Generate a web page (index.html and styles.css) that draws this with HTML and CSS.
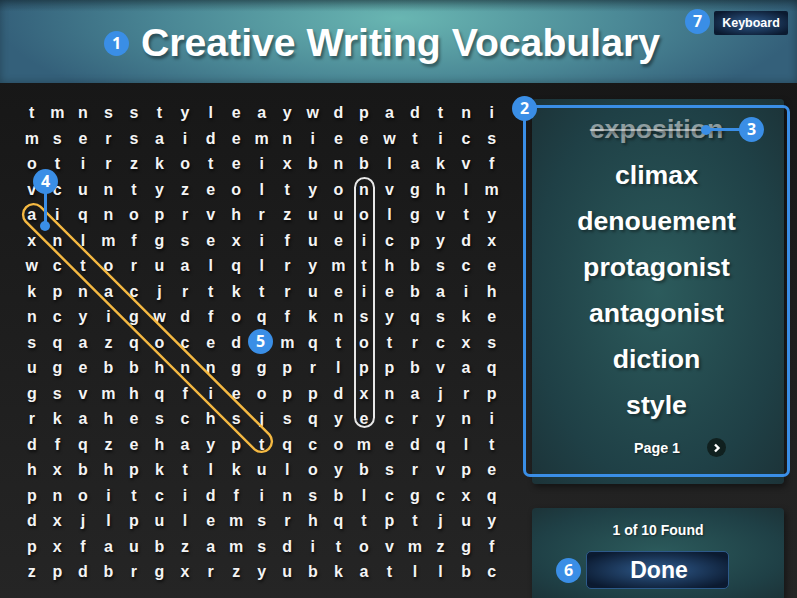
FILE: index.html
```html
<!DOCTYPE html>
<html lang="en">
  <head>
    <meta charset="UTF-8" />
    <title>Creative Writing Vocabulary</title>
    <link rel="stylesheet" href="styles.css">
  </head>
  <body>
    <header class="header">
      <h1 class="title">Creative Writing Vocabulary</h1>
      <button class="btn btn-keyboard">Keyboard</button>
      <span class="badge badge-1">1</span>
      <span class="badge badge-7">7</span>
    </header>

    <main class="main">
      <section class="puzzle">
        <div class="grid" id="grid"></div>

        <!-- found word outlines -->
        <svg class="marks" width="510" height="515" viewBox="0 0 510 515" fill="none">
          <rect x="355" y="95" width="19" height="249" rx="9.5" stroke="#e8e8e8" stroke-width="2" />
          <path d="M40.4 123.6 L269.4 351.6 A10.5 10.5 0 0 1 254.6 366.4 L25.6 138.4 A10.5 10.5 0 0 1 40.4 123.6 Z" stroke="#f5b942" stroke-width="2.4" />
        </svg>
        <span class="badge badge-4">4</span>
        <span class="pointer pointer-4"></span>
        <span class="dot dot-4"></span>
        <span class="badge badge-5">5</span>
      </section>

      <aside class="side">
        <div class="panel words">
          <ul class="word-list">
            <li class="found">exposition</li>
            <li>climax</li>
            <li>denouement</li>
            <li>protagonist</li>
            <li>antagonist</li>
            <li>diction</li>
            <li>style</li>
          </ul>
          <div class="pager">
            <span>Page 1</span>
            <span class="next">
              <svg width="8" height="10" viewBox="0 0 8 10" fill="none">
                <path d="M2 1.5 L5.5 5 L2 8.5" stroke="#fff" stroke-width="2.4" />
              </svg>
            </span>
          </div>
          <div class="highlight"></div>
          <span class="badge badge-2">2</span>
          <span class="badge badge-3">3</span>
          <span class="pointer pointer-3"></span>
          <span class="dot dot-3"></span>
        </div>

        <div class="panel status">
          <p class="count">1 of 10 Found</p>
          <div class="done-row">
            <span class="badge">6</span>
            <button class="btn btn-done">Done</button>
          </div>
        </div>
      </aside>
    </main>

    <script>
      // the cell under badge 5 stays blank
      const rows = [
        "tmnsstyleaywdpadtni",
        "msersaidemnieewtics",
        "otirzkoteixbnblakvf",
        "vcuntyzeoltyonvghlm",
        "aiqnoprvhrzuuolgvty",
        "xnlmfgsexifueicpydx",
        "wctorualqlrymthbsce",
        "kpnacjrtktrueiebaih",
        "ncyigwdfoqfknsyqske",
        "sqazqoced mqtotrcxs",
        "ugebbhnnggprlppbvaq",
        "gsvmhqfieoppdxnajrp",
        "rkaheschsjsqyecryni",
        "dfqzehayptqcomedqlt",
        "hxbhpktlkuloybsrvpe",
        "pnoitcidfinsblcgcxq",
        "dxjlpulemsrhqtptjuy",
        "pxfaubzamsditovmzgf",
        "zpdbrgxrzyubkatllbc",
      ];
      const grid = document.getElementById("grid");
      rows.forEach(function (row) {
        row.split("").forEach(function (letter) {
          const cell = document.createElement("span");
          cell.textContent = letter;
          grid.appendChild(cell);
        });
      });
    </script>
  </body>
</html>
```

FILE: styles.css
```css
* {
  box-sizing: border-box;
}
body {
  margin: 0;
  height: 598px;
  overflow: hidden;
  font-family: "Liberation Sans", Arial, sans-serif;
  font-weight: bold;
  color: #fff;
  background: linear-gradient(#151515, #252525);
}
.header {
  position: relative;
  height: 83px;
  display: flex;
  align-items: center;
  justify-content: center;
  background:
    linear-gradient(rgba(20, 40, 50, 0.45), rgba(0, 0, 0, 0) 14%),
    radial-gradient(ellipse 400px 110px at 50% 22%, #69b6b2, #4a8795 58%, #34607a 100%);
  box-shadow: inset 0 0 8px rgba(0, 0, 0, 0.3);
}
.title {
  margin: 2px 0 0 4px;
  font-size: 39.2px;
  line-height: 44px;
  text-shadow: 2px 3px 3px rgba(0, 0, 0, 0.4);
}
.btn {
  border: 0;
  color: #fff;
  font-family: inherit;
  font-weight: bold;
  background: radial-gradient(ellipse at center, #305c8e, #0b1a30 85%);
}
.btn-keyboard {
  position: absolute;
  top: 11px;
  right: 9px;
  width: 74px;
  height: 24px;
  padding: 0;
  font-size: 12.5px;
  border-radius: 2px;
}
.badge {
  width: 25px;
  height: 25px;
  border-radius: 50%;
  background: #3a8ee6;
  color: #fff;
  font-family: "Open Sans", sans-serif;
  font-size: 16px;
  line-height: 25px;
  text-align: center;
  flex: none;
}
.badge-1,
.badge-2,
.badge-3,
.badge-4,
.badge-5,
.badge-7 {
  position: absolute;
  z-index: 3;
}
.badge-1 {
  left: 104px;
  top: 31px;
}
.badge-7 {
  left: 685px;
  top: 9px;
}
.main {
  display: flex;
  height: 515px;
}
.puzzle {
  position: relative;
  width: 510px;
  flex: none;
  padding: 17px 0 0 19px;
}
.grid {
  display: grid;
  grid-template-columns: repeat(19, 25.55px);
  grid-auto-rows: 25.5px;
  font-size: 16px;
  color: #f4f4f4;
  text-shadow: 1px 2px 3px rgba(0, 0, 0, 0.7);
}
.grid span {
  text-align: center;
  line-height: 25px;
}
.marks {
  position: absolute;
  left: 0;
  top: 0;
}
.pointer {
  position: absolute;
  background: #3a8ee6;
  z-index: 2;
}
.dot {
  position: absolute;
  width: 10px;
  height: 10px;
  border-radius: 50%;
  background: #3a8ee6;
  z-index: 2;
}
.badge-4 {
  left: 33px;
  top: 86px;
}
.pointer-4 {
  left: 44px;
  top: 105px;
  width: 3px;
  height: 38px;
}
.dot-4 {
  left: 40px;
  top: 138px;
}
.badge-5 {
  left: 248px;
  top: 246px;
}
.side {
  width: 287px;
  flex: none;
  padding: 16px 0 0 22px;
}
.panel {
  position: relative;
  width: 252px;
  border-radius: 4px;
  background: radial-gradient(ellipse at center, #2c5b5c, #1f4046 70%, #1c3338);
  box-shadow: 2px 3px 6px rgba(0, 0, 0, 0.45);
}
.words {
  height: 385px;
  padding: 7px 3px 0 0;
}
.word-list {
  margin: 0;
  padding: 0;
  list-style: none;
  text-align: center;
  font-size: 26.7px;
  line-height: 46px;
  text-shadow: 2px 2px 3px rgba(0, 0, 0, 0.4);
}
.word-list .found {
  color: rgba(255, 255, 255, 0.5);
  text-decoration: line-through;
}
.pager {
  position: relative;
  display: flex;
  justify-content: center;
  align-items: center;
  margin-top: 12px;
  padding-left: 1px;
  font-size: 14.3px;
  text-shadow: 1px 1px 2px rgba(0, 0, 0, 0.5);
}
.next {
  position: absolute;
  left: 175px;
  top: -2px;
  width: 19px;
  height: 19px;
  display: flex;
  align-items: center;
  justify-content: center;
  border-radius: 50%;
  background: #10201f;
}
.highlight {
  position: absolute;
  left: -9px;
  top: 6px;
  width: 267px;
  height: 372px;
  border: 3px solid #3a8ee6;
  border-radius: 7px;
  pointer-events: none;
}
.badge-2 {
  left: -20px;
  top: -3px;
}
.badge-3 {
  left: 207px;
  top: 18px;
}
.pointer-3 {
  left: 174px;
  top: 29px;
  width: 36px;
  height: 3px;
}
.dot-3 {
  left: 169px;
  top: 26px;
}
.status {
  height: 90px;
  margin-top: 24px;
  padding-top: 14px;
  border-radius: 4px 4px 0 0;
}
.count {
  margin: 0;
  text-align: center;
  font-size: 14px;
  line-height: 16px;
  text-shadow: 1px 1px 2px rgba(0, 0, 0, 0.5);
}
.done-row {
  display: flex;
  align-items: center;
  gap: 5px;
  margin: 13px 0 0 24px;
}
.btn-done {
  width: 143px;
  height: 38px;
  font-size: 23px;
  border: 1px solid #2d5a8a;
  border-radius: 5px;
  padding: 0 0 0 3px;
}
```
